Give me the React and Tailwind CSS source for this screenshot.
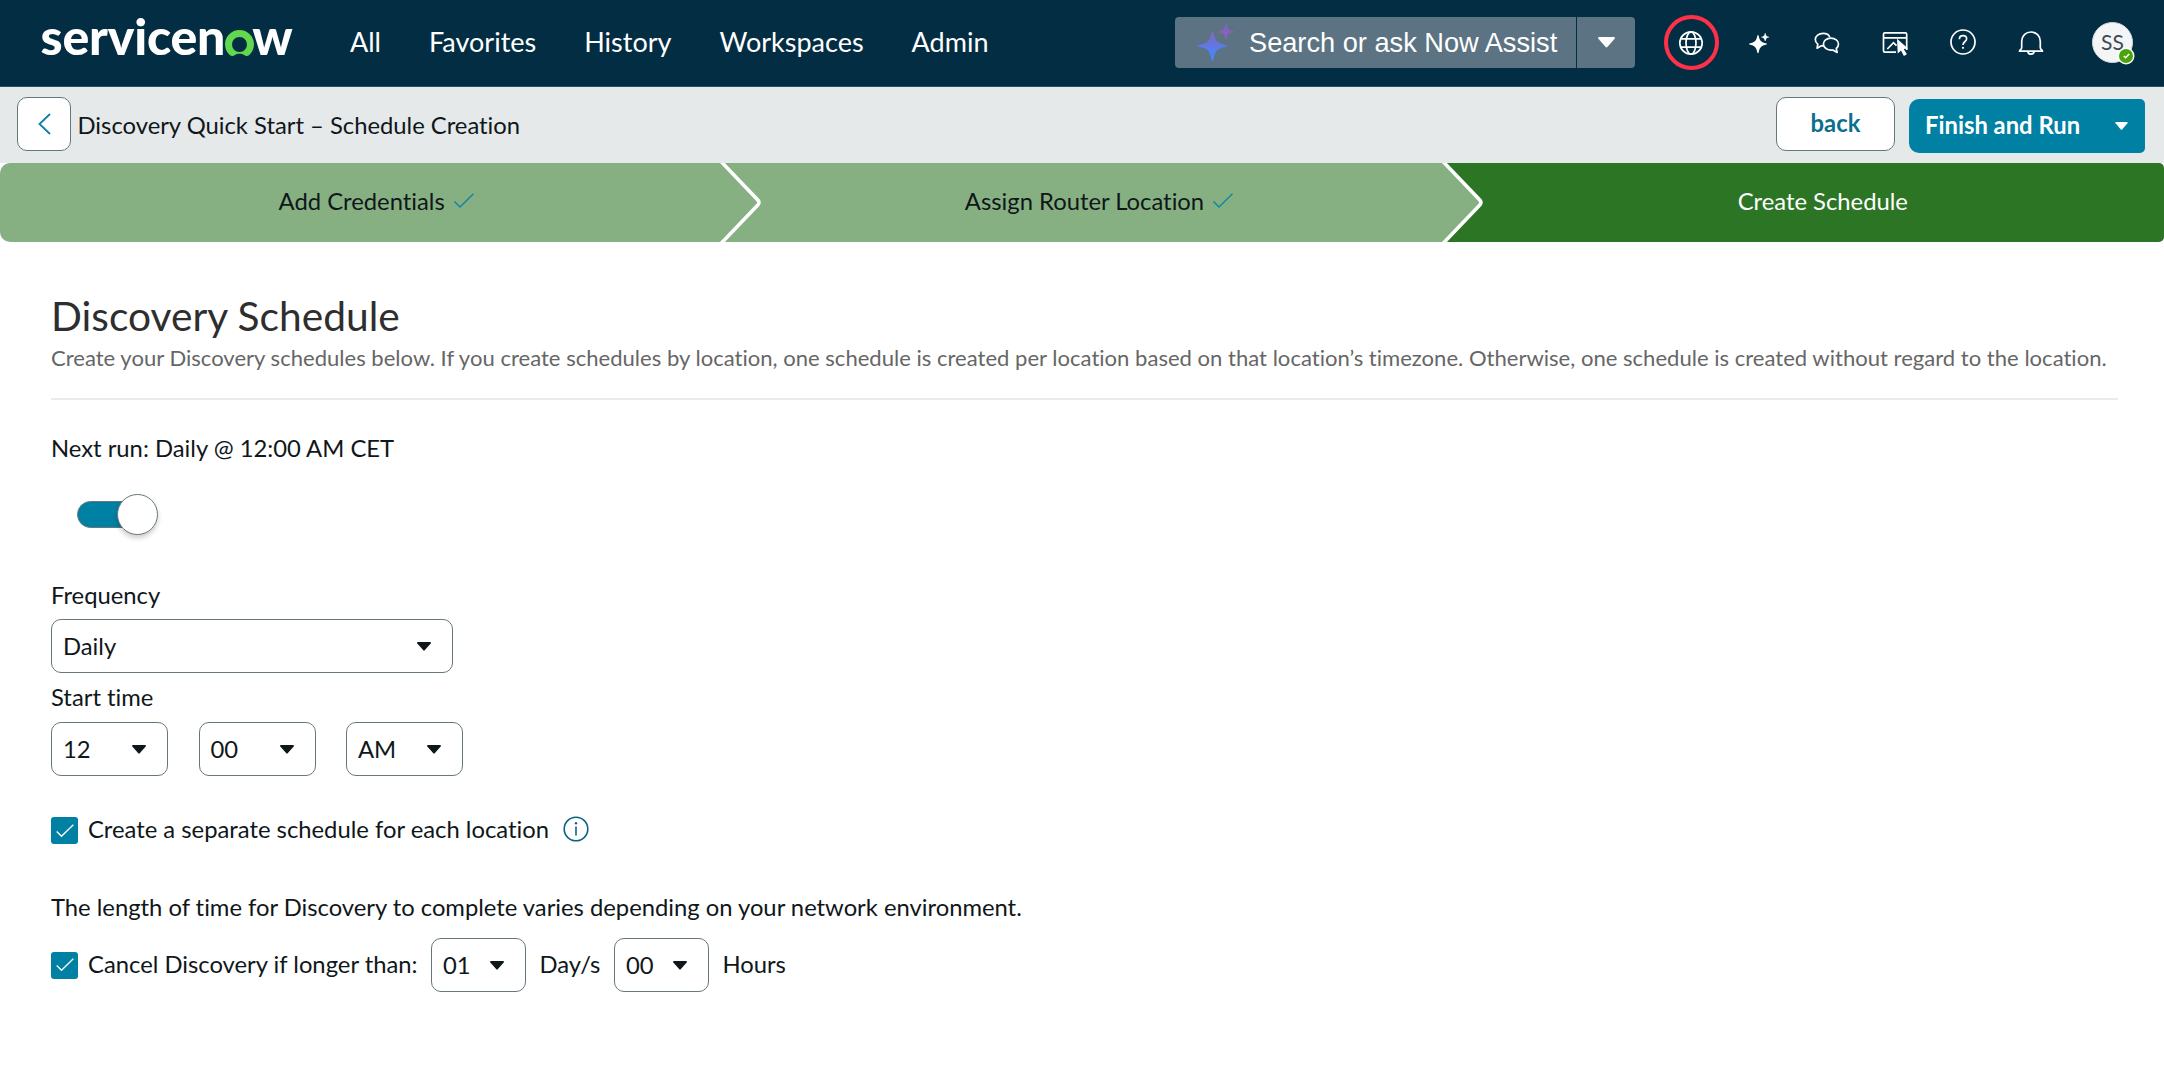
import { useState } from 'react';

function Logo() {
  return (
    <div className="flex items-center h-[60px] text-white text-[50px] leading-[60px] font-black tracking-[-0.2px]">
      <span>servicen</span>
      <svg width="29" height="27" viewBox="0 0 29 27" className="mt-[15px] mr-[-2px]">
        <path
          d="M14.500 0C6.500 0 0 6.400 0 14.200c0 4.400 1.900 8.300 5 11 1.200 1 2.800 1.100 4 .2 1.500-1.100 3.300-1.700 5.500-1.700s4 .6 5.500 1.700c1.200.9 2.800.8 4-.2 3.100-2.700 5-6.600 5-11C29 6.400 22.500 0 14.500 0zM14.500 22c-4.300 0-7.400-3.200-7.400-7.500s3.100-7.600 7.400-7.600 7.400 3.300 7.400 7.600-3.100 7.500-7.400 7.500z"
          fill="#62d84e"
        />
      </svg>
      <span>w</span>
    </div>
  );
}

function Caret({ className = '' }) {
  return (
    <svg width="14" height="9" viewBox="0 0 14 9" className={className}>
      <path d="M1 0h12c.8 0 1.200.8.7 1.400L7.700 8.300a1 1 0 0 1-1.400 0L.3 1.400C-.2.8.2 0 1 0z" fill="currentColor" />
    </svg>
  );
}

function CheckIcon({ className = '' }) {
  return (
    <svg width="20" height="16" viewBox="0 0 20 16" fill="none" stroke="currentColor" strokeWidth="1.500" className={className}>
      <path d="M0.500 8.500l5.500 5.500L19.500 0.800" />
    </svg>
  );
}

function GlobeIcon() {
  return (
    <svg width="26" height="26" viewBox="0 0 26 26" fill="none" stroke="currentColor" strokeWidth="1.700">
      <circle cx="13" cy="13" r="11.200" />
      <ellipse cx="13" cy="13" rx="5" ry="11.200" />
      <path d="M2.800 8.800h20.400M2.800 17.200h20.400" />
    </svg>
  );
}

function SparkleIcon() {
  return (
    <svg width="26" height="26" viewBox="0 0 26 26" fill="currentColor">
      <path d="M12 5c.3 0 .5.200.6.500 1 5.200 2.300 6.700 8 8 .5.200.5.900 0 1.100-5.700 1.300-7 3-8 8.200-.1.600-1.100.6-1.200 0-1-5.200-2.300-6.900-8-8.200-.5-.2-.5-.9 0-1.100 5.700-1.300 7-2.800 8-8 .1-.3.300-.5.600-.5z" />
      <path d="M19.200 3c.2 0 .3.100.4.400.4 2.200 1 2.900 3.300 3.300.4.100.4.600 0 .7-2.300.4-2.900 1.100-3.300 3.300-.1.400-.7.400-.8 0-.4-2.200-1-2.900-3.300-3.300-.4-.1-.4-.6 0-.7 2.300-.4 2.900-1.100 3.300-3.300.1-.3.200-.4.400-.4z" />
    </svg>
  );
}

function ChatIcon() {
  return (
    <svg width="26" height="26" viewBox="0 0 26 26" fill="none" stroke="currentColor" strokeWidth="1.700" strokeLinejoin="round">
      <path d="M15.800 7.200C15 4.900 12.300 3.300 9.200 3.300c-4.400 0-7.900 2.700-7.900 6.200 0 1.900 1 3.600 2.500 4.700l-.7 4 4.200-2.400c.8.200 1.500.2 2.300.1" />
      <path d="M16.900 8.200c4.300 0 7.600 2.600 7.600 5.900 0 1.800-.8 3.300-2.200 4.400l.8 4-4.200-2.500c-4.900.8-9.500-2-9.500-5.900 0-3.300 3.200-5.900 7.500-5.900z" />
    </svg>
  );
}

function WindowCursorIcon() {
  return (
    <svg width="28" height="28" viewBox="0 0 28 28" fill="none">
      <path d="M15 23.200H3.900c-.8 0-1.400-.6-1.400-1.400V5.200c0-.8.6-1.400 1.400-1.400h20.400c.8 0 1.400.6 1.400 1.400V21M2.500 8.900h23.200" stroke="currentColor" strokeWidth="1.700" />
      <path d="M6.300 20l6.200-6.300 3 3" stroke="currentColor" strokeWidth="1.700" />
      <path d="M16 9.800l11 9.600-4.300.6 3.200 5.300-3 1.600-2.900-5.400-3.300 2.900z" fill="currentColor" />
    </svg>
  );
}

function HelpIcon() {
  return (
    <svg width="28" height="28" viewBox="0 0 28 28" fill="none" stroke="currentColor" strokeWidth="1.700" className="mb-[1px]">
      <circle cx="14" cy="14" r="12" />
      <path d="M10.400 11.200c0-2.100 1.500-3.500 3.600-3.500s3.600 1.300 3.600 3.200c0 2.600-3.600 2.700-3.600 6" />
      <circle cx="14" cy="19.800" r="1.100" fill="currentColor" stroke="none" />
    </svg>
  );
}

function BellIcon() {
  return (
    <svg width="28" height="28" viewBox="0 0 28 28" fill="none" stroke="currentColor" strokeWidth="1.700">
      <path d="M4.700 18.800V12.300C4.700 7 8.800 3 14 3s9.300 4 9.300 9.300v6.500c0 .6.300 1.200 1 1.700.9.600 1.200 1 1.200 1.700H2.500c0-.7.300-1.100 1.200-1.700.7-.5 1-1.100 1-1.700z" strokeLinejoin="round" />
      <path d="M10.800 22.500c.3 1.800 1.600 2.700 3.200 2.700s2.900-.9 3.200-2.700" />
    </svg>
  );
}

function AssistIcon() {
  return (
    <svg width="36" height="38" viewBox="0 0 36 38">
      <defs>
        <linearGradient id="assist" x1="0" y1="0" x2="0" y2="1">
          <stop offset="0" stopColor="#8a63b8" />
          <stop offset="0.5" stopColor="#5f78e6" />
          <stop offset="1" stopColor="#3f8bff" />
        </linearGradient>
      </defs>
      <path d="M14.500 7.500c.6 0 .9.400 1 1 1.300 8.200 3.600 10.800 12.500 12.500.6.100 1 .4 1 .9s-.4.800-1 .9c-8.900 1.700-11.200 4.700-12.500 13-.1.600-.4 1-1 1s-.9-.4-1-1c-1.300-8.300-3.600-11.300-12.500-13-.6-.1-1-.4-1-.9s.4-.8 1-.9c8.900-1.700 11.200-4.300 12.500-12.500.1-.6.400-1 1-1z" fill="url(#assist)" />
      <path d="M28 0c.4 0 .6.300.7.600.8 4.400 1.900 5.600 6.300 6.400.4.100.7.300.7.700s-.3.600-.7.700c-4.400.8-5.500 2-6.300 6.400-.1.400-.3.700-.7.700s-.6-.3-.7-.7c-.8-4.400-1.900-5.600-6.300-6.400-.4-.1-.7-.3-.7-.7s.3-.6.700-.7c4.400-.8 5.500-2 6.300-6.400.1-.3.300-.6.700-.6z" fill="#8663bb" />
    </svg>
  );
}

function Select({ value, className = '' }) {
  return (
    <button
      type="button"
      className={`flex items-center justify-between h-[54px] pl-[11px] pr-[21px] bg-white border-[1.5px] border-[#68777d] rounded-[10px] ${className}`}
    >
      <span>{value}</span>
      <Caret />
    </button>
  );
}

function Checkbox({ checked, onChange, label }) {
  return (
    <label className="flex items-center gap-2.5">
      <input type="checkbox" checked={checked} onChange={onChange} className="sr-only" />
      <span className="flex items-center justify-center w-[27px] h-[27px] rounded-[3px] bg-[#0080a3] text-white">
        {checked && <CheckIcon className="w-[18px] h-[14px]" />}
      </span>
      <span className="pb-[3px]">{label}</span>
    </label>
  );
}

function Step({ label, done, current, last, className = '' }) {
  return (
    <div
      className={`relative flex items-center justify-center gap-[9px] pb-[3px] ${
        current ? 'bg-[#2c7524] text-white' : 'bg-[#87b082]'
      } ${className}`}
    >
      <span>{label}</span>
      {done && <CheckIcon className="text-[#0f86a5]" />}
      {/* Arrow that overlaps the next step */}
      {!last && (
        <svg width="44" height="79" viewBox="0 0 44 79" className="absolute top-0 left-full -ml-px z-10">
          <path d="M0 0h1.500l36.300 37q2 2.400 0 4.800L1.500 79H0z" fill="#87b082" />
          <path d="M1 -1.500l36.800 38.500q2.200 2.500 0 5L1 80.500" fill="none" stroke="#fff" strokeWidth="3.600" />
        </svg>
      )}
    </div>
  );
}

const navItems = ['All', 'Favorites', 'History', 'Workspaces', 'Admin'];

const headerIcons = [SparkleIcon, ChatIcon, WindowCursorIcon, HelpIcon, BellIcon];

export default function App() {
  const [enabled, setEnabled] = useState(true);
  const [perLocation, setPerLocation] = useState(true);
  const [cancelLong, setCancelLong] = useState(true);

  return (
    <div className="min-h-screen bg-white text-[#10171a] text-[23.8px] leading-[30px] font-['Lato',sans-serif] [font-variant-ligatures:none]">
      {/* Top navigation */}
      <header className="flex items-center h-[87px] pb-px pl-[40.5px] pr-[31px] bg-[#032d42] border-b border-[#2c5063]">
        <div className="w-[309.5px] pb-[14px]">
          <Logo />
        </div>
        <nav className="flex gap-[48px] pb-[1px] text-white text-[27px] leading-9">
          {navItems.map((item) => (
            <a key={item} href="#">{item}</a>
          ))}
        </nav>

        <div className="flex gap-px ml-auto mr-[22px] h-[51px] text-white">
          <button type="button" className="flex items-center w-[401px] pl-[23px] rounded-l-[4px] bg-[#5b7382] text-left">
            <AssistIcon />
            <span className="ml-[15px] font-['Liberation_Sans',sans-serif] text-[27.2px] whitespace-nowrap">Search or ask Now Assist</span>
          </button>
          <button type="button" className="flex items-center justify-center w-[58px] rounded-r-[4px] bg-[#5b7382]">
            <Caret className="w-[17px] h-[11px]" />
          </button>
        </div>

        <div className="flex items-center text-white">
          <button type="button" className="flex justify-center w-[68px]">
            <span className="flex items-center justify-center w-[55px] h-[55px] rounded-full border-[4px] border-[#ff3148]">
              <GlobeIcon />
            </span>
          </button>
          {headerIcons.map((Icon, i) => (
            <button key={i} type="button" className="flex justify-center w-[68px]">
              <Icon />
            </button>
          ))}
        </div>

        <div className="relative ml-[27px] w-[41px] h-[41px] rounded-full bg-[#f4f5f7] border border-[#d5dade] flex items-center justify-center pb-px text-[21px] text-[#3e4a50]">
          SS
          <span className="absolute -right-px -bottom-px flex items-center justify-center w-[14px] h-[14px] rounded-full bg-[#4ba40b] ring-[1.5px] ring-white">
            <svg width="7" height="6" viewBox="0 0 7 6" fill="none" stroke="#fff" strokeWidth="1.600">
              <path d="M0.800 3l1.700 1.700L6.200 1" />
            </svg>
          </span>
        </div>
      </header>

      {/* Page title and actions */}
      <div className="flex items-start h-[76px] pt-[10px] pl-[17px] pr-[19px] bg-[#e5e9ea]">
        <button type="button" className="flex items-center justify-center w-[54px] h-[54px] bg-white border-[1.5px] border-[#68777d] rounded-[10px] text-[#0f7fa0]">
          <svg width="13" height="22" viewBox="0 0 13 22" fill="none" stroke="currentColor" strokeWidth="1.800">
            <path d="M12 1L1.500 11 12 21" />
          </svg>
        </button>
        <h2 className="ml-[6.5px] mt-[13px]">Discovery Quick Start – Schedule Creation</h2>
        <button type="button" className="ml-auto w-[119px] h-[54px] pb-[3px] bg-white border-[1.5px] border-[#68777d] rounded-[10px] font-bold text-[#0b6f8e]">
          back
        </button>
        <button type="button" className="flex items-center justify-between mt-[2px] ml-[14px] w-[236px] h-[54px] pl-[16px] pr-[17px] rounded-l-[10px] rounded-r-[5px] bg-[#0080a3] font-bold text-white">
          <span className="pb-[3px]">Finish and Run</span>
          <Caret className="w-[13px] h-[8px]" />
        </button>
      </div>

      {/* Steps */}
      <div className="grid grid-cols-3 h-[78.5px] rounded-l-[10px] rounded-r-[5px] overflow-hidden">
        <Step label="Add Credentials" done className="pl-[31px]" />
        <Step label="Assign Router Location" done className="pl-[34px]" />
        <Step label="Create Schedule" current last className="pl-[39px]" />
      </div>

      {/* Schedule form */}
      <main className="pt-[50.5px] pl-[51px] pr-[46px]">
        <h1 className="text-[40.7px] leading-[48px] text-[#2e2e2e]">Discovery Schedule</h1>
        <p className="mt-1 text-[22.07px] leading-7 text-[#666] whitespace-nowrap">
          Create your Discovery schedules below. If you create schedules by location, one schedule is created per location based on that location’s timezone. Otherwise, one schedule is created without regard to the location.
        </p>
        <hr className="mt-[26px] border-t-2 border-[#ebebeb]" />

        <p className="mt-[33px]">Next run: Daily @ 12:00 AM CET</p>
        <button
          type="button"
          role="switch"
          aria-checked={enabled}
          onClick={() => setEnabled(!enabled)}
          className="flex items-center mt-[31px] ml-[25.5px] h-[41px]"
        >
          <span className="w-[60px] h-[27px] rounded-full bg-[#0080a3] border-[1.5px] border-[#68777d]" />
          <span className="-ml-[19.5px] w-[41px] h-[41px] rounded-full bg-white border-[1.5px] border-[#68777d] shadow-[0_3px_5px_rgba(0,0,0,0.2)]" />
        </button>

        <p className="mt-[45px]">Frequency</p>
        <Select value="Daily" className="mt-[9px] w-[402px]" />
        <p className="mt-[9px]">Start time</p>
        <div className="flex gap-[30.5px] mt-[10px]">
          <Select value="12" className="w-[117px]" />
          <Select value="00" className="w-[117px]" />
          <Select value="AM" className="w-[117px]" />
        </div>

        <div className="flex items-center gap-[14px] mt-[38px]">
          <Checkbox
            checked={perLocation}
            onChange={() => setPerLocation(!perLocation)}
            label="Create a separate schedule for each location"
          />
          <svg width="26" height="26" viewBox="0 0 26 26" fill="none" stroke="#0b6483" strokeWidth="1.600" className="mb-[4px]">
            <circle cx="13" cy="13" r="11.800" />
            <path d="M13 10.500v9" />
            <circle cx="13" cy="7.300" r="1.200" fill="#0b6483" stroke="none" />
          </svg>
        </div>

        <p className="mt-[45px] tracking-[-0.01px]">The length of time for Discovery to complete varies depending on your network environment.</p>
        <div className="flex items-center gap-[13.5px] mt-4">
          <Checkbox
            checked={cancelLong}
            onChange={() => setCancelLong(!cancelLong)}
            label="Cancel Discovery if longer than:"
          />
          <Select value="01" className="w-[95px]" />
          <span className="pb-[3px]">Day/s</span>
          <Select value="00" className="w-[95px]" />
          <span className="pb-[3px]">Hours</span>
        </div>
      </main>
    </div>
  );
}
